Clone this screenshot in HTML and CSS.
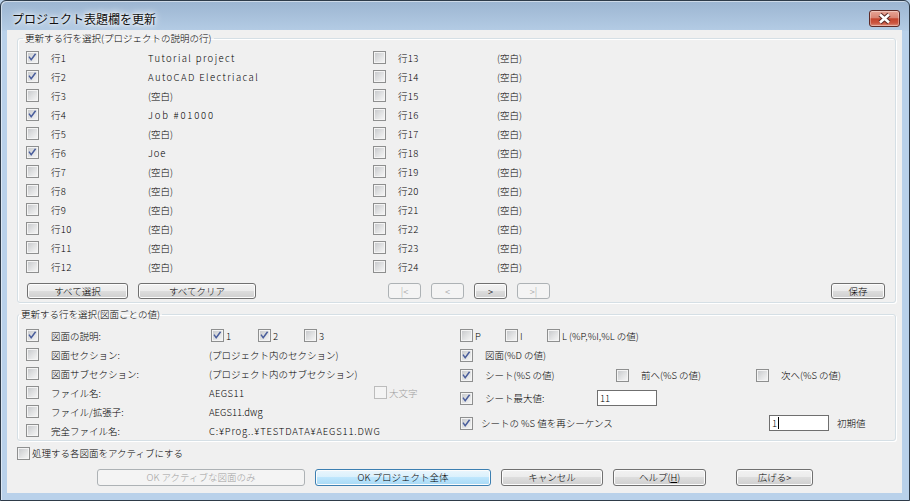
FILE: index.html
```html
<!DOCTYPE html>
<html lang="ja">
<head>
    <meta charset="UTF-8">
    <title>プロジェクト表題欄を更新</title>
    <link rel="stylesheet" href="styles.css">
</head>
<body>
    <div class="ventana">
        <div class="barra-titulo">
            <span class="titulo">プロジェクト表題欄を更新</span>
            <div class="cerrar">
                <svg viewBox="0 0 29 15" width="29" height="15">
                    <path class="x-borde" d="M10 3.5l9 8M19 3.5l-9 8"/>
                    <path class="x-blanco" d="M10 3.5l9 8M19 3.5l-9 8"/>
                </svg>
            </div>
        </div>

        <div class="cliente">
            <!-- filas del proyecto -->
            <fieldset class="grupo grupo-filas">
                <legend>更新する行を選択(プロジェクトの説明の行)</legend>
                <div class="columnas">
                    <div class="columna izquierda">
                        <div class="fila"><span class="cb on"><svg viewBox="0 0 11 11"><path d="M2 4.6l2.2 3.2 4.4-6"/></svg></span><span class="num">行1</span><span class="valor ancho">Tutorial project</span></div>
                        <div class="fila"><span class="cb on"><svg viewBox="0 0 11 11"><path d="M2 4.6l2.2 3.2 4.4-6"/></svg></span><span class="num">行2</span><span class="valor ancho">AutoCAD Electriacal</span></div>
                        <div class="fila"><span class="cb"></span><span class="num">行3</span><span class="valor">(空白)</span></div>
                        <div class="fila"><span class="cb on"><svg viewBox="0 0 11 11"><path d="M2 4.6l2.2 3.2 4.4-6"/></svg></span><span class="num">行4</span><span class="valor muy-ancho">Job #01000</span></div>
                        <div class="fila"><span class="cb"></span><span class="num">行5</span><span class="valor">(空白)</span></div>
                        <div class="fila"><span class="cb on"><svg viewBox="0 0 11 11"><path d="M2 4.6l2.2 3.2 4.4-6"/></svg></span><span class="num">行6</span><span class="valor latin">Joe</span></div>
                        <div class="fila"><span class="cb"></span><span class="num">行7</span><span class="valor">(空白)</span></div>
                        <div class="fila"><span class="cb"></span><span class="num">行8</span><span class="valor">(空白)</span></div>
                        <div class="fila"><span class="cb"></span><span class="num">行9</span><span class="valor">(空白)</span></div>
                        <div class="fila"><span class="cb"></span><span class="num">行10</span><span class="valor">(空白)</span></div>
                        <div class="fila"><span class="cb"></span><span class="num">行11</span><span class="valor">(空白)</span></div>
                        <div class="fila"><span class="cb"></span><span class="num">行12</span><span class="valor">(空白)</span></div>
                    </div>
                    <div class="columna derecha">
                        <div class="fila"><span class="cb"></span><span class="num">行13</span><span class="valor">(空白)</span></div>
                        <div class="fila"><span class="cb"></span><span class="num">行14</span><span class="valor">(空白)</span></div>
                        <div class="fila"><span class="cb"></span><span class="num">行15</span><span class="valor">(空白)</span></div>
                        <div class="fila"><span class="cb"></span><span class="num">行16</span><span class="valor">(空白)</span></div>
                        <div class="fila"><span class="cb"></span><span class="num">行17</span><span class="valor">(空白)</span></div>
                        <div class="fila"><span class="cb"></span><span class="num">行18</span><span class="valor">(空白)</span></div>
                        <div class="fila"><span class="cb"></span><span class="num">行19</span><span class="valor">(空白)</span></div>
                        <div class="fila"><span class="cb"></span><span class="num">行20</span><span class="valor">(空白)</span></div>
                        <div class="fila"><span class="cb"></span><span class="num">行21</span><span class="valor">(空白)</span></div>
                        <div class="fila"><span class="cb"></span><span class="num">行22</span><span class="valor">(空白)</span></div>
                        <div class="fila"><span class="cb"></span><span class="num">行23</span><span class="valor">(空白)</span></div>
                        <div class="fila"><span class="cb"></span><span class="num">行24</span><span class="valor">(空白)</span></div>
                    </div>
                </div>
                <div class="fila-botones">
                    <button class="btn btn-todo">すべて選択</button>
                    <button class="btn btn-limpiar">すべてクリア</button>
                    <div class="nav">
                        <button class="btn btn-nav" disabled>|&lt;</button>
                        <button class="btn btn-nav" disabled>&lt;</button>
                        <button class="btn btn-nav">&gt;</button>
                        <button class="btn btn-nav" disabled>&gt;|</button>
                    </div>
                    <button class="btn btn-guardar">保存</button>
                </div>
            </fieldset>

            <!-- valores por dibujo -->
            <fieldset class="grupo grupo-dibujo">
                <legend>更新する行を選択(図面ごとの値)</legend>
                <div class="mitades">
                    <div class="mitad-izq">
                        <div class="fila">
                            <span class="cb on"><svg viewBox="0 0 11 11"><path d="M2 4.6l2.2 3.2 4.4-6"/></svg></span><span class="etiqueta">図面の説明:</span>
                            <span class="opcion op1"><span class="cb on"><svg viewBox="0 0 11 11"><path d="M2 4.6l2.2 3.2 4.4-6"/></svg></span><span class="op-txt">1</span></span>
                            <span class="opcion op2"><span class="cb on"><svg viewBox="0 0 11 11"><path d="M2 4.6l2.2 3.2 4.4-6"/></svg></span><span class="op-txt">2</span></span>
                            <span class="opcion"><span class="cb"></span><span class="op-txt">3</span></span>
                        </div>
                        <div class="fila"><span class="cb"></span><span class="etiqueta">図面セクション:</span><span class="valor">(プロジェクト内のセクション)</span></div>
                        <div class="fila"><span class="cb"></span><span class="etiqueta">図面サブセクション:</span><span class="valor">(プロジェクト内のサブセクション)</span></div>
                        <div class="fila">
                            <span class="cb"></span><span class="etiqueta">ファイル名:</span><span class="valor valor-archivo">AEGS11</span>
                            <span class="cb off"></span><span class="op-txt deshabilitado">大文字</span>
                        </div>
                        <div class="fila"><span class="cb"></span><span class="etiqueta">ファイル/拡張子:</span><span class="valor">AEGS11.dwg</span></div>
                        <div class="fila"><span class="cb"></span><span class="etiqueta">完全ファイル名:</span><span class="valor latin">C:¥Prog..¥TESTDATA¥AEGS11.DWG</span></div>
                    </div>
                    <div class="mitad-der">
                        <div class="fila f1">
                            <span class="opcion op-p"><span class="cb"></span><span class="op-txt">P</span></span>
                            <span class="opcion op-i"><span class="cb"></span><span class="op-txt">I</span></span>
                            <span class="opcion"><span class="cb"></span><span class="op-txt">L (%P,%I,%L の値)</span></span>
                        </div>
                        <div class="fila f2">
                            <span class="cb on"><svg viewBox="0 0 11 11"><path d="M2 4.6l2.2 3.2 4.4-6"/></svg></span><span class="etq">図面(%D の値)</span>
                        </div>
                        <div class="fila f3">
                            <span class="item item-hoja"><span class="cb on"><svg viewBox="0 0 11 11"><path d="M2 4.6l2.2 3.2 4.4-6"/></svg></span><span class="etq">シート(%S の値)</span></span>
                            <span class="item item-prev"><span class="cb"></span><span class="etq">前へ(%S の値)</span></span>
                            <span class="item"><span class="cb"></span><span class="etq">次へ(%S の値)</span></span>
                        </div>
                        <div class="fila f4">
                            <span class="item item-max"><span class="cb on"><svg viewBox="0 0 11 11"><path d="M2 4.6l2.2 3.2 4.4-6"/></svg></span><span class="etq">シート最大値:</span></span>
                            <span class="caja">11</span>
                        </div>
                        <div class="fila f5">
                            <span class="item item-sec"><span class="cb on"><svg viewBox="0 0 11 11"><path d="M2 4.6l2.2 3.2 4.4-6"/></svg></span><span class="etq etq-sec">シートの %S 値を再シーケンス</span></span>
                            <span class="caja">1<span class="cursor"></span></span>
                            <span class="inicial">初期値</span>
                        </div>
                    </div>
                </div>
            </fieldset>

            <div class="activar">
                <span class="cb"></span><span class="activar-txt">処理する各図面をアクティブにする</span>
            </div>

            <div class="acciones">
                <button class="btn btn-activo" disabled>OK アクティブな図面のみ</button>
                <button class="btn btn-defecto">OK プロジェクト全体</button>
                <button class="btn btn-cancelar">キャンセル</button>
                <button class="btn btn-ayuda">ヘルプ(<u>H</u>)</button>
                <button class="btn btn-ampliar">広げる&gt;</button>
            </div>
        </div>
    </div>
</body>
</html>
```

FILE: styles.css
```css
body {
    margin: 0;
    background-color: #b9d1ea;
    font-family: "Noto Sans CJK JP", "Noto Sans", sans-serif;
    font-size: 9.5px;
    font-weight: 300;
    color: #000;
}

.ventana {
    width: 910px;
    height: 501px;
    box-sizing: border-box;
    border: 1px solid #2e3b49;
    border-radius: 6px 6px 0 0;
    background: linear-gradient(#9cb5d1 0px, #b3cbe4 29px, #b9d1ea 30px, #b9d1ea 100%);
    box-shadow: inset 1px 1px 0 rgba(255, 255, 255, 0.5);
    overflow: hidden;
}

.barra-titulo {
    height: 29px;
    display: flex;
    align-items: flex-start;
    justify-content: space-between;
}

.titulo {
    margin: 10px 0 0 11px;
    font-size: 12px;
    font-weight: 400;
    line-height: 16px;
    color: #101010;
    text-shadow: 0 0 6px #fff, 0 0 10px #fff, 0 0 3px #fff;
}

.cerrar {
    width: 29px;
    height: 15px;
    margin: 9px 9px 0 0;
    border: 1px solid #5e2a26;
    border-radius: 3px;
    background: linear-gradient(#e7a596 0%, #d98574 45%, #c4452e 52%, #cb553f 80%, #df8e7c 100%);
    box-shadow: inset 0 0 0 1px rgba(255, 255, 255, 0.35);
}

.cerrar svg {
    display: block;
}

.x-borde {
    fill: none;
    stroke: #5a2b28;
    stroke-width: 4.6;
}

.x-blanco {
    fill: none;
    stroke: #fff;
    stroke-width: 2.6;
}

.cliente {
    height: 463px;
    margin: 0 7px 0 6px;
    box-sizing: border-box;
    padding: 2px 6px 7px 10px;
    background-color: #f0f0f0;
}

/* cajas de grupo */
.grupo {
    margin: 0;
    min-width: 0;
    border: 1px solid #d5dfe5;
    border-radius: 3px;
    box-shadow: inset 1px 1px 0 #fff, 1px 1px 0 #fff;
    padding: 4px 8px 3px 8px;
}

.grupo legend {
    padding: 0 2px;
    margin-left: -3px;
    line-height: 12px;
}

.grupo-dibujo {
    margin-top: 5px;
    padding: 6px 8px 0 8px;
}

.grupo-dibujo legend {
    margin-left: -7px;
}

.fila {
    display: flex;
    align-items: center;
    height: 19px;
    white-space: nowrap;
}

/* casillas */
.cb {
    display: block;
    flex: none;
    width: 11px;
    height: 11px;
    border: 1px solid #8e8f8f;
    background: linear-gradient(135deg, #c4c6c9 0%, #e2e3e4 55%, #f8f8f8 100%);
    box-shadow: inset 0 0 0 1px #f4f4f4;
}

.cb svg {
    display: block;
    width: 11px;
    height: 11px;
}

.cb path {
    fill: none;
    stroke: #4a5e9c;
    stroke-width: 1.5;
}

.cb.off {
    border-color: #bcbcbc;
    background: #f4f4f4;
    box-shadow: none;
}

.columnas {
    display: flex;
}

.columna.izquierda {
    width: 347px;
}

.num {
    margin-left: 12px;
    width: 97px;
    letter-spacing: 0.3px;
}

.derecha .num {
    width: 99px;
}

.latin {
    letter-spacing: 0.8px;
}

.ancho {
    letter-spacing: 1.4px;
}

.muy-ancho {
    letter-spacing: 1.8px;
}

.valor-archivo {
    letter-spacing: 0.4px;
}

/* botones */
.btn {
    box-sizing: border-box;
    height: 16px;
    padding: 0;
    border: 1px solid #707070;
    border-radius: 3px;
    background: linear-gradient(#f2f2f2 0%, #ebebeb 50%, #dddddd 50%, #cfcfcf 100%);
    box-shadow: inset 0 0 0 1px #fcfcfc;
    font-family: "Noto Sans CJK JP", "Noto Sans", sans-serif;
    font-size: 9.5px;
    font-weight: 300;
    line-height: 14px;
    color: #000;
    text-align: center;
}

.btn:disabled {
    border-color: #adb2b5;
    background: #f4f4f4;
    box-shadow: none;
    color: #a0a0a0;
}

.fila-botones {
    display: flex;
    margin-top: 7px;
}

.btn-todo {
    width: 101px;
    margin-left: 1px;
}

.btn-limpiar {
    width: 118px;
    margin-left: 10px;
}

.nav {
    display: flex;
    gap: 10px;
    margin-left: 132px;
}

.btn-nav {
    width: 33px;
}

.btn-guardar {
    width: 54px;
    margin-left: auto;
    margin-right: 2px;
}

/* grupo de dibujo */
.mitades {
    display: flex;
}

.mitad-izq {
    width: 434px;
}

.mitad-der {
    flex: 1;
}

.etiqueta {
    margin-left: 12px;
    width: 158px;
}

.opcion {
    display: flex;
    align-items: center;
}

.op1 {
    width: 47px;
    margin-left: 2px;
}

.op2 {
    width: 46px;
}

.op-txt {
    margin-left: 2px;
}

.valor-archivo {
    width: 165px;
}

.deshabilitado {
    color: #a0a0a0;
}

.mitad-der .f2,
.mitad-der .f3 {
    height: 20px;
}

.mitad-der .f4 {
    height: 26px;
}

.mitad-der .f5 {
    height: 24px;
}

.op-p {
    width: 45px;
}

.op-i {
    width: 42px;
}

.item {
    display: flex;
    align-items: center;
}

.etq {
    margin-left: 12px;
}

.item-hoja {
    width: 156px;
}

.item-prev {
    width: 140px;
}

.item-max {
    width: 137px;
}

.item-sec {
    width: 309px;
}

.etq-sec {
    margin-left: 8px;
}

.caja {
    display: flex;
    align-items: center;
    box-sizing: border-box;
    width: 60px;
    height: 16px;
    padding-left: 2px;
    border: 1px solid #6f6f6f;
    background: #fff;
}

.cursor {
    width: 1px;
    height: 12px;
    margin-left: 1px;
    background: #000;
}

.inicial {
    margin-left: 8px;
}

.activar {
    display: flex;
    align-items: center;
    height: 18px;
    margin-top: 3px;
}

.activar-txt {
    margin-left: 2px;
}

.acciones {
    display: flex;
    margin-top: 7px;
    padding-left: 80px;
}

.acciones .btn {
    height: 17px;
    line-height: 15px;
    margin-right: 10px;
}

.btn-activo {
    width: 208px;
}

.btn-defecto {
    width: 176px;
    border-color: #3c7fb1 !important;
    background: linear-gradient(#eaf6fd 0%, #d9f0fc 50%, #bee6fd 50%, #a7d9f5 100%) !important;
}

.btn-cancelar {
    width: 102px;
}

.btn-ayuda {
    width: 93px;
}

.acciones .btn-ayuda {
    margin-right: 30px;
}

.btn-ampliar {
    width: 77px;
}
```
